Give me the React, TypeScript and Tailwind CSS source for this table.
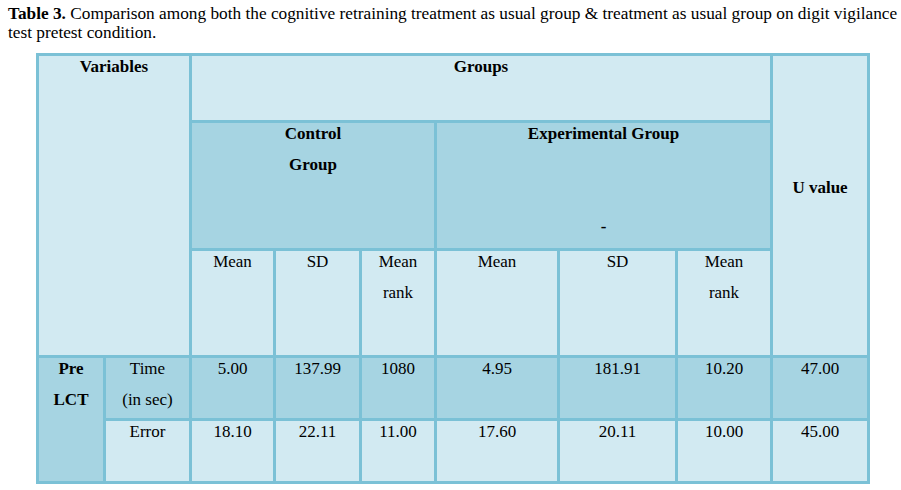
import React from 'react'

const light = 'bg-[#d2eaf2]'
const dark = 'bg-[#a6d4e2]'

function Cell({
  className = '',
  lines,
  bold = false,
}: {
  className?: string
  lines: string[]
  bold?: boolean
}) {
  return (
    <div className={`flex flex-col items-center gap-[10px] text-center leading-[21px] ${bold ? 'font-bold' : ''} ${className}`}>
      {lines.map((l, i) => (
        <span key={i} className="min-h-[21px]">
          {l}
        </span>
      ))}
    </div>
  )
}

export default function App() {
  const timeRow = ['5.00', '137.99', '1080', '4.95', '181.91', '10.20', '47.00']
  const errorRow = ['18.10', '22.11', '11.00', '17.60', '20.11', '10.00', '45.00']

  return (
    <div className="w-[901px] h-[490px] overflow-hidden bg-white text-black [font-family:Liberation_Serif,Times_New_Roman,serif]">
      {/* Caption */}
      <p className="pl-[8px] pt-[4px] text-[17.3px] leading-[19px] whitespace-nowrap">
        <span className="font-bold">Table 3.</span> Comparison among both the cognitive retraining treatment as usual group &amp; treatment as usual group on digit vigilance
        <br />
        test pretest condition.
      </p>

      {/* Table */}
      <div className="ml-[36px] mt-[11px] w-[834px] p-[3px] bg-[#7bc1d6] grid gap-[3px] text-[17px] grid-cols-[64px_83px_81px_83px_72px_120px_115px_92px_94px] grid-rows-[64px_125px_104px_60px_60px]">
        <Cell className={`${light} col-span-2 row-span-3`} lines={['Variables']} bold />
        <Cell className={`${light} col-span-6`} lines={['Groups']} bold />
        <Cell className={`${light} row-span-3 pt-[121px]`} lines={['U value']} bold />

        <Cell className={`${dark} col-span-3`} lines={['Control', 'Group']} bold />
        <Cell className={`${dark} col-span-3`} lines={['Experimental Group', '', '', '-']} bold />

        <Cell className={light} lines={['Mean']} />
        <Cell className={light} lines={['SD']} />
        <Cell className={light} lines={['Mean', 'rank']} />
        <Cell className={light} lines={['Mean']} />
        <Cell className={light} lines={['SD']} />
        <Cell className={light} lines={['Mean', 'rank']} />

        <Cell className={`${dark} row-span-2`} lines={['Pre', 'LCT']} bold />
        <Cell className={dark} lines={['Time', '(in sec)']} />
        {timeRow.map((v, i) => (
          <Cell key={`t${i}`} className={dark} lines={[v]} />
        ))}

        <Cell className={light} lines={['Error']} />
        {errorRow.map((v, i) => (
          <Cell key={`e${i}`} className={light} lines={[v]} />
        ))}
      </div>
    </div>
  )
}
